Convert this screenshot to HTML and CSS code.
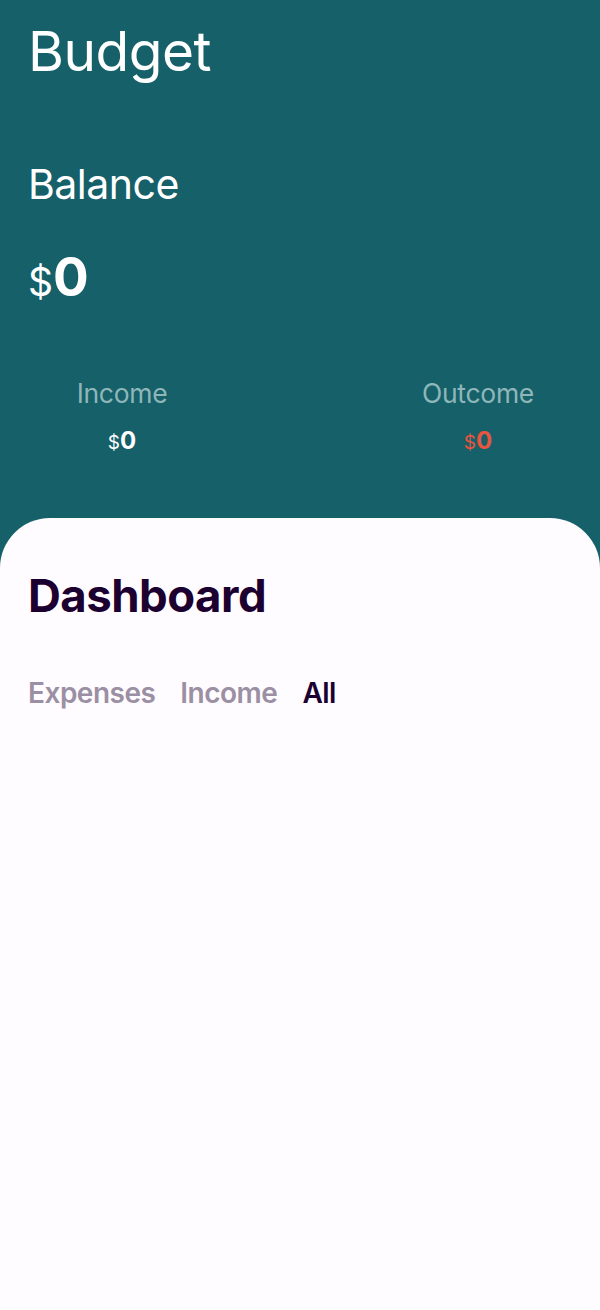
FILE: index.html
```html
<!DOCTYPE html>
<html>
<head>
<meta charset="utf-8">
<link rel="stylesheet" href="styles.css">
</head>
<body>
<div class="app">
  <header class="top">
    <h1 class="title">Budget</h1>
    <div class="balance">
      <div class="balance-label">Balance</div>
      <div class="balance-value"><span class="cur">$</span><span class="num">0</span></div>
    </div>
    <div class="totals">
      <div class="total">
        <div class="total-label">Income</div>
        <div class="total-value"><span class="cur">$</span><span class="num">0</span></div>
      </div>
      <div class="total">
        <div class="total-label">Outcome</div>
        <div class="total-value out"><span class="cur">$</span><span class="num">0</span></div>
      </div>
    </div>
  </header>
  <main class="sheet">
    <h2 class="dash">Dashboard</h2>
    <nav class="tabs">
      <span class="tab">Expenses</span>
      <span class="tab">Income</span>
      <span class="tab active">All</span>
    </nav>
  </main>
</div>
</body>
</html>
```

FILE: styles.css
```css
* { box-sizing: border-box; margin: 0; padding: 0; }
html, body { height: 100%; }
body {
  background: #156069;
  font-family: "Inter", "Liberation Sans", sans-serif;
}
.app { display: flex; flex-direction: column; min-height: 1310px; }
.top {
  color: #ffffff;
  padding: 21px 28px 0 28px;
  height: 518px;
}
.title {
  font-weight: 400;
  font-size: 55px;
  line-height: 60px;
  letter-spacing: -0.5px;
}
.balance { margin-top: 80px; }
.balance-label { font-size: 41px; line-height: 46px; font-weight: 400; letter-spacing: -0.5px; }
.balance-value { margin-top: 45px; line-height: 50px; }
.balance-value .cur { font-size: 39px; font-weight: 400; }
.balance-value .num { font-size: 53px; font-weight: 700; }
.totals {
  display: flex;
  justify-content: space-between;
  margin-top: 63px;
}
.total { width: 188px; display: flex; flex-direction: column; align-items: center; }
.total-label { color: #8fb6b9; font-size: 26.5px; line-height: 30px; letter-spacing: -0.3px; }
.total-value { margin-top: 20px; line-height: 26px; color: #ffffff; }
.total-value .cur { font-size: 19px; }
.total-value .num { font-size: 24px; font-weight: 700; }
.total-value.out { color: #e8553f; }
.sheet {
  flex: 1;
  background: #fffcff;
  border-radius: 50px 50px 0 0;
  padding: 52px 28px 0 28px;
}
.dash {
  color: #1c0030;
  font-size: 45.5px;
  line-height: 52px;
  font-weight: 700;
  letter-spacing: -0.5px;
}
.tabs { display: flex; gap: 25px; margin-top: 55px; }
.tab { color: #9b8fa4; font-size: 28px; line-height: 32px; font-weight: 600; letter-spacing: -0.5px; }
.tab.active { color: #1c0030; }
```
